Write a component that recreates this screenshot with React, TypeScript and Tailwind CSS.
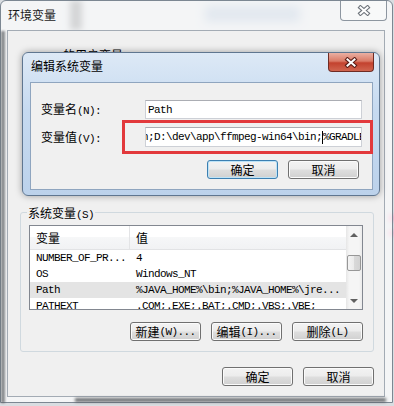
import React from 'react';

const ASCII = /^[\x00-\x7f]+$/;

// Chinese in Noto CJK, ASCII in a 6px-advance mono like the Windows UI font
function Mixed({ text }: { text: string }) {
  const parts = text.split(/([\x00-\x7f]+)/).filter(Boolean);
  return (
    <>
      {parts.map((p, i) =>
        ASCII.test(p) ? (
          <span key={i} className="font-['Liberation_Mono',monospace] text-[11px] tracking-[-0.6px] whitespace-pre">{p}</span>
        ) : (
          <span key={i} className="font-['Noto_Sans_CJK_SC',sans-serif] text-[12px]">{p}</span>
        )
      )}
    </>
  );
}

function CloseX({ outline }: { outline: string }) {
  return (
    <svg width="14" height="11" viewBox="0 0 14 11">
      <path d="M3.5 2.5L10.5 8.5M10.5 2.5L3.5 8.5" stroke={outline} strokeWidth="4.2" strokeLinecap="square" fill="none" />
      <path d="M3.5 2.5L10.5 8.5M10.5 2.5L3.5 8.5" stroke="#ffffff" strokeWidth="2" strokeLinecap="square" fill="none" />
    </svg>
  );
}

function Btn({ label, primary }: { label: string; primary?: boolean }) {
  return (
    <div
      className={`flex h-[19px] w-[71px] items-center justify-center rounded-[3px] border leading-[14px] text-black bg-[linear-gradient(180deg,#f3f3f3,#ececec_48%,#dedede_52%,#d0d0d0)] ${
        primary ? 'border-[#3c7fb1] shadow-[inset_0_0_0_1px_#bde3f7]' : 'border-[#707070] shadow-[inset_0_0_0_1px_#fbfbfb]'
      }`}
    >
      <Mixed text={label} />
    </div>
  );
}

const rows = [
  ['NUMBER_OF_PR...', '4'],
  ['OS', 'Windows_NT'],
  ['Path', '%JAVA_HOME%\\bin;%JAVA_HOME%\\jre...'],
  ['PATHEXT', '.COM;.EXE;.BAT;.CMD;.VBS;.VBE;'],
];

export default function App() {
  return (
    <div className="relative h-[406px] w-[394px] overflow-hidden bg-[#d9dde1] text-black">
      {/* blurred desktop behind the glass frame */}
      <div className="absolute left-[70px] top-0 h-[30px] w-[12px] bg-[#6f7377] blur-[3px]" />
      <div className="absolute left-[205px] top-[6px] h-[16px] w-[95px] bg-[#9fb3cb] blur-[5px]" />
      <div className="absolute right-0 top-[214px] h-[8px] w-[5px] bg-[#f29ac0] blur-[2px]" />
      <div className="absolute right-0 top-[230px] h-[6px] w-[5px] bg-[#f29ac0] blur-[2px]" />

      <div className="relative h-[403px] w-[393px] rounded-t-[6px] border border-[#7c8792] bg-white/70">
        <div className="absolute left-0 top-[30px] h-[372px] w-[4px] bg-[#5a5e63]/70 blur-[1px]" />
        <div className="absolute bottom-0 left-[74px] h-[4px] w-[311px] bg-[#4b4f53]/80 blur-[1.5px]" />

        {/* title bar */}
        <div className="flex h-[29px] items-start justify-between pl-[7px] pr-[5px]">
          <div className="mt-[6px] font-['Noto_Sans_CJK_SC',sans-serif] text-[12px] leading-[16px] text-[#1a1a1a]">环境变量</div>
          <div className="flex h-[20px] w-[47px] items-center justify-center rounded-b-[4px] border border-t-0 border-[#8d96a0] bg-white/40">
            <CloseX outline="#6d737a" />
          </div>
        </div>

        {/* client area */}
        <div className="ml-[6px] h-[367px] w-[378px] border border-[#a3abb4] bg-[#f0f0f0]">
          <div className="flex flex-col pl-[12px] pr-[10px]">
            <div className="mt-[16px] h-[14px] pl-[7px] leading-[14px]">
              <Mixed text="1_011 的用户变量(U)" />
            </div>

            {/* system variables group */}
            <div className="relative mt-[151px] h-[140px] rounded-[3px] border border-[#d0d9df] pl-[8px] pr-[10px] pt-[12px]">
              <span className="absolute -top-[8px] left-[6px] bg-[#f0f0f0] px-[1px] leading-[14px]">
                <Mixed text="系统变量(S)" />
              </span>

              <div className="flex h-[85px] w-[334px] overflow-hidden border border-[#828790] bg-white">
                <div className="flex-1 overflow-hidden">
                  <div className="flex h-[24px] border-b border-[#e2e3e5] bg-[linear-gradient(180deg,#ffffff,#ffffff_50%,#f6f7f8_50%,#f1f2f4)] leading-[14px]">
                    <div className="flex w-[100px] items-center border-r border-[#e3e4e6] pl-[6px]">
                      <Mixed text="变量" />
                    </div>
                    <div className="flex items-center pl-[6px]">
                      <Mixed text="值" />
                    </div>
                  </div>
                  {rows.map(([k, v]) => (
                    <div key={k} className={`flex h-[16px] items-center whitespace-nowrap font-['Liberation_Mono',monospace] text-[11px] leading-[14px] tracking-[-0.6px] ${k === 'Path' ? 'bg-[#e4e4e4]' : ''}`}>
                      <div className="w-[100px] pl-[6px]">{k}</div>
                      <div className="pl-[6px]">{v}</div>
                    </div>
                  ))}
                </div>

                {/* scrollbar */}
                <div className="flex w-[16px] flex-col bg-[linear-gradient(90deg,#e6e6e6,#f5f5f5_20%,#f5f5f5_80%,#ebebeb)]">
                  <div className="flex h-[17px] items-center justify-center">
                    <div className="h-0 w-0 border-x-[4px] border-b-[4px] border-x-transparent border-b-[#606060]" />
                  </div>
                  <div className="mx-auto mt-[12px] h-[16px] w-[14px] rounded-[2px] border border-[#979797] bg-[linear-gradient(90deg,#f4f4f4,#eaeaea_50%,#d9d9d9_50%,#d2d2d2)]" />
                  <div className="flex-1" />
                  <div className="flex h-[17px] items-center justify-center">
                    <div className="h-0 w-0 border-x-[4px] border-t-[4px] border-x-transparent border-t-[#606060]" />
                  </div>
                </div>
              </div>

              <div className="mt-[12px] flex justify-end gap-[10px]">
                <Btn label="新建(W)..." />
                <Btn label="编辑(I)..." />
                <Btn label="删除(L)" />
              </div>
            </div>

            <div className="mt-[15px] flex justify-end gap-[10px]">
              <Btn label="确定" />
              <Btn label="取消" />
            </div>
          </div>
        </div>

        {/* edit dialog on top */}
        <div className="absolute left-[21px] top-[51px] h-[144px] w-[358px] rounded-[6px] border border-[#5f7690] bg-[linear-gradient(180deg,#dde9f6,#c6daf0_40%,#bcd2eb)] shadow-[0_0_7px_rgba(0,0,0,0.35)]">
          <div className="flex h-[29px] items-start justify-between pl-[8px] pr-[5px]">
            <div className="mt-[5px] font-['Noto_Sans_CJK_SC',sans-serif] text-[12px] leading-[16px] text-black">编辑系统变量</div>
            <div className="flex h-[19px] w-[46px] items-center justify-center rounded-b-[4px] border border-t-0 border-[#6f2b23] bg-[linear-gradient(180deg,#eab0a3,#da7a66_45%,#c3422e_55%,#d0654f)]">
              <CloseX outline="#5b1d16" />
            </div>
          </div>

          <div className="relative ml-[7px] h-[108px] w-[343px] border border-[#8fa5bf] bg-[#f0f0f0]">
            <div className="flex flex-col pl-[10px] pr-[10px] pt-[17px]">
              <div className="flex h-[19px] items-center">
                <div className="w-[104px] leading-[14px]">
                  <Mixed text="变量名(N):" />
                </div>
                <div className="flex h-[19px] w-[217px] items-center border border-[#cdd0d6] border-t-[#abadb3] bg-white pl-[2px] font-['Liberation_Mono',monospace] text-[11px] leading-[14px] tracking-[-0.6px]">
                  Path
                </div>
              </div>
              <div className="mt-[8px] flex h-[20px] items-center">
                <div className="w-[104px] leading-[14px]">
                  <Mixed text="变量值(V):" />
                </div>
                <div className="flex h-[20px] w-[217px] items-center overflow-hidden whitespace-nowrap border border-[#cdd0d6] border-t-[#abadb3] bg-white font-['Liberation_Mono',monospace] text-[11px] leading-[14px] tracking-[-0.6px]">
                  <span className="-ml-[4px]">{'n;D:\\dev\\app\\ffmpeg-win64\\bin;'}</span>
                  <span className="h-[13px] w-px shrink-0 bg-black" />
                  <span>{'%GRADLE_HOME%\\bin'}</span>
                </div>
              </div>
              <div className="mt-[13px] flex justify-end gap-[10px] pr-[3px]">
                <Btn label="确定" primary />
                <Btn label="取消" />
              </div>
            </div>

            {/* red annotation box */}
            <div className="absolute left-[91px] top-[37px] h-[34px] w-[251px] border-[3px] border-[#e2393c]" />
          </div>
        </div>
      </div>
    </div>
  );
}
